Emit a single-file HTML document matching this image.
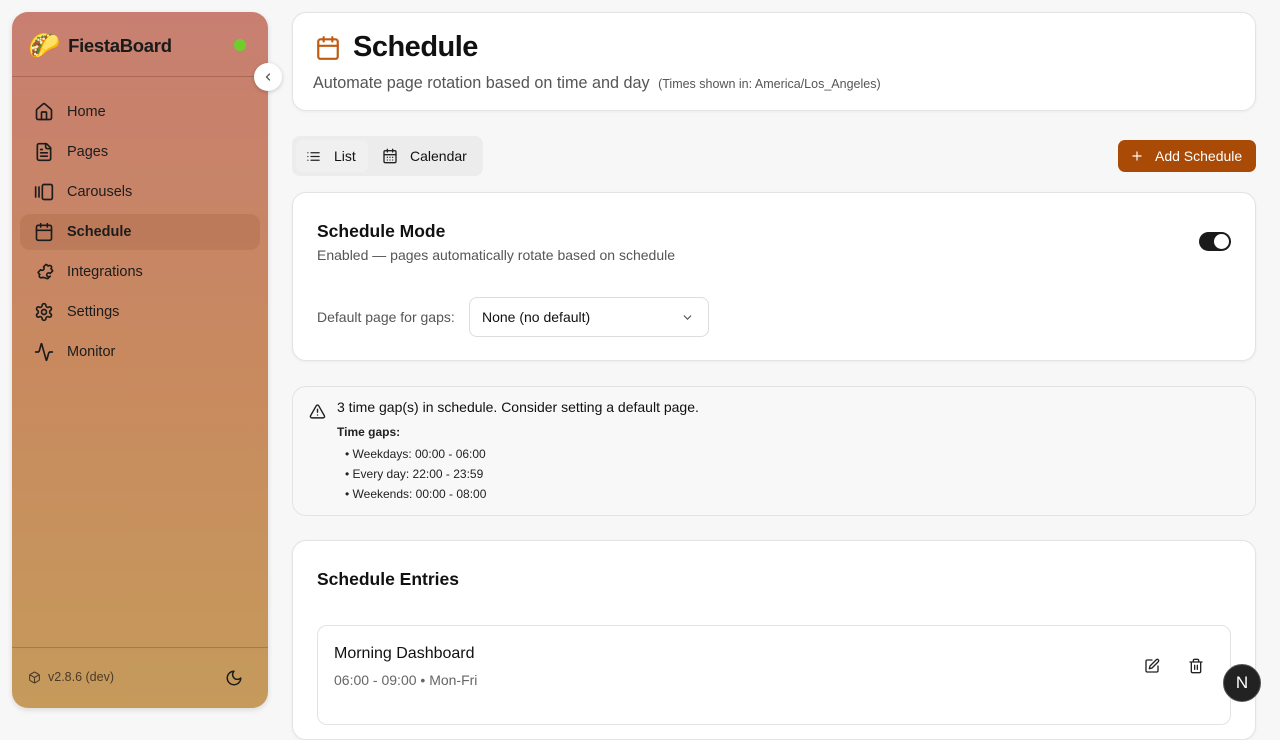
<!DOCTYPE html>
<html><head><meta charset="utf-8"><style>
*{box-sizing:border-box;margin:0;padding:0}
body{width:1280px;height:720px;overflow:hidden;background:#f7f7f7;font-family:"Liberation Sans",sans-serif;color:#111;position:relative}
.sb{position:absolute;left:12px;top:12px;width:256px;height:696px;border-radius:16px;background:linear-gradient(180deg,#c87f71 0%,#c8895f 50%,#c59a5b 100%);box-shadow:0 2px 6px rgba(0,0,0,.12)}
.logo{position:absolute;left:16px;top:18px;display:flex;align-items:center;font-size:18.5px;font-weight:bold;color:#1a1a1a;letter-spacing:-.3px}
.dot{position:absolute;left:222px;top:27px;width:12px;height:12px;border-radius:50%;background:#6fcf2a}
.div1{position:absolute;left:0;right:0;top:64px;border-top:1px solid rgba(120,60,40,.35)}
.col{position:absolute;left:254px;top:63px;width:28px;height:28px;border-radius:50%;background:#fff;box-shadow:0 1px 4px rgba(0,0,0,.2);display:flex;align-items:center;justify-content:center}
.nav{position:absolute;left:8px;top:82px;width:240px}
.it{height:36px;margin-bottom:4px;display:flex;align-items:center;padding-left:14px;font-size:14.5px;color:#1c1c1c;border-radius:10px}
.it svg{margin-right:13px}
.it.a{background:rgba(120,60,30,.15);font-weight:bold}
.div2{position:absolute;left:0;right:0;top:635px;border-top:1px solid rgba(120,70,30,.35)}
.ver{position:absolute;left:16px;top:658px;font-size:12.5px;color:#4a3a2a;display:flex;align-items:center}
.card{position:absolute;left:292px;width:964px;background:#fff;border:1px solid #e3e3e3;border-radius:14px;box-shadow:0 1px 3px rgba(0,0,0,.05)}
</style></head><body>
<div class="sb">
 <div class="logo"><span style="font-size:26px;margin-right:8px">🌮</span>FiestaBoard</div>
 <div class="dot"></div>
 <div class="div1"></div>
 <div class="nav">
  <div class="it"><svg width="20" height="20" viewBox="0 0 24 24" fill="none" stroke="#1c1c1c" stroke-width="2" stroke-linecap="round" stroke-linejoin="round"><path d="M15 21v-8a1 1 0 0 0-1-1h-4a1 1 0 0 0-1 1v8"/><path d="M3 10a2 2 0 0 1 .7-1.5l7-6a2 2 0 0 1 2.6 0l7 6A2 2 0 0 1 21 10v9a2 2 0 0 1-2 2H5a2 2 0 0 1-2-2z"/></svg>Home</div>
  <div class="it"><svg width="20" height="20" viewBox="0 0 24 24" fill="none" stroke="#1c1c1c" stroke-width="2" stroke-linecap="round" stroke-linejoin="round"><path d="M15 2H6a2 2 0 0 0-2 2v16a2 2 0 0 0 2 2h12a2 2 0 0 0 2-2V7z"/><path d="M14 2v4a2 2 0 0 0 2 2h4M16 13H8M16 17H8M10 9H8"/></svg>Pages</div>
  <div class="it"><svg width="20" height="20" viewBox="0 0 24 24" fill="none" stroke="#1c1c1c" stroke-width="2" stroke-linecap="round" stroke-linejoin="round"><path d="M2 6v12M6 6v12"/><rect x="10" y="3" width="12" height="18" rx="2"/></svg>Carousels</div>
  <div class="it a"><svg width="20" height="20" viewBox="0 0 24 24" fill="none" stroke="#1c1c1c" stroke-width="2" stroke-linecap="round" stroke-linejoin="round"><path d="M8 2v4M16 2v4"/><rect x="3" y="4" width="18" height="18" rx="2"/><path d="M3 10h18"/></svg>Schedule</div>
  <div class="it"><svg width="20" height="20" viewBox="0 0 24 24" fill="none" stroke="#1c1c1c" stroke-width="2" stroke-linecap="round" stroke-linejoin="round"><path d="M15.4 19.7a1 1 0 0 0 .7.3 1 1 0 0 0 .7-.3l2.6-2.6a2.4 2.4 0 1 1 0-3.4L22 11.2a1 1 0 0 0 0-1.4l-1.6-1.6a2.4 2.4 0 1 0-3.4-3.4L15.4 3.3a1 1 0 0 0-1.4 0l-2.6 2.6a2.4 2.4 0 1 1-3.4 3.4L5.4 11.9a1 1 0 0 0 0 1.4l1.600 1.6a2.4 2.4 0 1 0 3.4 3.4z"/></svg>Integrations</div>
  <div class="it"><svg width="20" height="20" viewBox="0 0 24 24" fill="none" stroke="#1c1c1c" stroke-width="2" stroke-linecap="round" stroke-linejoin="round"><path d="M12.2 2h-.4a2 2 0 0 0-2 2v.2a2 2 0 0 1-1 1.7l-.4.3a2 2 0 0 1-2 0l-.2-.1a2 2 0 0 0-2.7.7l-.2.4a2 2 0 0 0 .7 2.7l.2.1a2 2 0 0 1 1 1.7v.5a2 2 0 0 1-1 1.8l-.2.1a2 2 0 0 0-.7 2.7l.2.4a2 2 0 0 0 2.7.7l.2-.1a2 2 0 0 1 2 0l.4.3a2 2 0 0 1 1 1.7v.2a2 2 0 0 0 2 2h.4a2 2 0 0 0 2-2v-.2a2 2 0 0 1 1-1.7l.4-.3a2 2 0 0 1 2 0l.2.1a2 2 0 0 0 2.7-.7l.2-.4a2 2 0 0 0-.7-2.7l-.2-.1a2 2 0 0 1-1-1.8v-.5a2 2 0 0 1 1-1.7l.2-.1a2 2 0 0 0 .7-2.7l-.2-.4a2 2 0 0 0-2.7-.7l-.2.1a2 2 0 0 1-2 0l-.4-.3a2 2 0 0 1-1-1.7V4a2 2 0 0 0-2-2z"/><circle cx="12" cy="12" r="3"/></svg>Settings</div>
  <div class="it"><svg width="20" height="20" viewBox="0 0 24 24" fill="none" stroke="#1c1c1c" stroke-width="2" stroke-linecap="round" stroke-linejoin="round"><path d="M22 12h-2.5a2 2 0 0 0-1.9 1.5l-2.4 8.3a.3.3 0 0 1-.5 0L9.2 2.2a.3.3 0 0 0-.5 0L6.4 10.5A2 2 0 0 1 4.5 12H2"/></svg>Monitor</div>
 </div>
 <div class="div2"></div>
 <div class="ver"><svg width="13" height="13" viewBox="0 0 24 24" fill="none" stroke="#4a3a2a" stroke-width="2"><path d="M21 8a2 2 0 0 0-1-1.7l-7-4a2 2 0 0 0-2 0l-7 4A2 2 0 0 0 3 8v8a2 2 0 0 0 1 1.7l7 4a2 2 0 0 0 2 0l7-4a2 2 0 0 0 1-1.7z"/><path d="M3.3 7 12 12l8.7-5M12 22V12"/></svg><span style="margin-left:7px">v2.8.6 (dev)</span></div>
 <svg style="position:absolute;left:213px;top:657px" width="18" height="18" viewBox="0 0 24 24" fill="none" stroke="#1c1c1c" stroke-width="2" stroke-linecap="round" stroke-linejoin="round"><path d="M12 3a6 6 0 0 0 9 9 9 9 0 1 1-9-9z"/></svg>
</div>
<div class="col"><svg width="12" height="12" viewBox="0 0 24 24" fill="none" stroke="#555" stroke-width="2.5" stroke-linecap="round"><path d="M15 18l-6-6 6-6"/></svg></div>

<div class="card" style="top:12px;height:99px">
 <svg style="position:absolute;left:22px;top:22px" width="26" height="26" viewBox="0 0 24 24" fill="none" stroke="#c05a10" stroke-width="2" stroke-linecap="round" stroke-linejoin="round"><path d="M8 2v4M16 2v4"/><rect x="3" y="4" width="18" height="18" rx="2"/><path d="M3 10h18"/></svg>
 <div style="position:absolute;left:60px;top:18px;font-size:29px;font-weight:bold;letter-spacing:-.5px">Schedule</div>
 <div style="position:absolute;left:20px;top:61px;font-size:16.2px;color:#555">Automate page rotation based on time and day <span style="font-size:12.5px;margin-left:4px">(Times shown in: America/Los_Angeles)</span></div>
</div>

<div style="position:absolute;left:292px;top:136px;width:191px;height:40px;background:#ececec;border-radius:8px;font-size:14px">
 <div style="position:absolute;left:4px;top:4px;width:72px;height:32px;background:#f0f0f0;border-radius:6px"></div>
 <svg style="position:absolute;left:14px;top:13px" width="15" height="15" viewBox="0 0 24 24" fill="none" stroke="#222" stroke-width="2" stroke-linecap="round"><path d="M3 6h.01M3 12h.01M3 18h.01M8 6h13M8 12h13M8 18h13"/></svg>
 <span style="position:absolute;left:42px;top:12px">List</span>
 <svg style="position:absolute;left:90px;top:12px" width="16" height="16" viewBox="0 0 24 24" fill="none" stroke="#222" stroke-width="2" stroke-linecap="round"><path d="M8 2v4M16 2v4"/><rect x="3" y="4" width="18" height="18" rx="2"/><path d="M3 10h18M8 14h.01M12 14h.01M16 14h.01M8 18h.01M12 18h.01M16 18h.01"/></svg>
 <span style="position:absolute;left:118px;top:12px">Calendar</span>
</div>
<div style="position:absolute;left:1118px;top:140px;width:138px;height:32px;background:#a94a06;border-radius:7px;color:#fff;font-size:14px;display:flex;align-items:center;padding-left:12px">
 <svg width="14" height="14" viewBox="0 0 24 24" fill="none" stroke="#fff" stroke-width="2" stroke-linecap="round"><path d="M5 12h14M12 5v14"/></svg><span style="margin-left:11px">Add Schedule</span></div>

<div class="card" style="top:192px;height:169px">
 <div style="position:absolute;left:24px;top:28px;font-size:17.5px;font-weight:600">Schedule Mode</div>
 <div style="position:absolute;left:24px;top:54px;font-size:14px;color:#555">Enabled — pages automatically rotate based on schedule</div>
 <div style="position:absolute;left:906px;top:39px;width:32px;height:19px;border-radius:10px;background:#1a1a1a"><div style="position:absolute;right:2px;top:2px;width:15px;height:15px;border-radius:50%;background:#fff"></div></div>
 <div style="position:absolute;left:24px;top:116px;font-size:14px;color:#555">Default page for gaps:</div>
 <div style="position:absolute;left:176px;top:104px;width:240px;height:40px;border:1px solid #ddd;border-radius:8px;font-size:14px;padding:11px 12px">None (no default)
  <svg style="position:absolute;right:14px;top:13px" width="13" height="13" viewBox="0 0 24 24" fill="none" stroke="#555" stroke-width="2.2" stroke-linecap="round"><path d="M6 9l6 6 6-6"/></svg></div>
</div>

<div class="card" style="top:386px;height:130px;background:#f8f8f8;box-shadow:none">
 <svg style="position:absolute;left:16px;top:16px" width="17" height="17" viewBox="0 0 24 24" fill="none" stroke="#222" stroke-width="2" stroke-linecap="round" stroke-linejoin="round"><path d="M21.7 18 13.7 4a2 2 0 0 0-3.5 0l-8 14a2 2 0 0 0 1.8 3h16a2 2 0 0 0 1.7-3M12 9v4M12 17h.01"/></svg>
 <div style="position:absolute;left:44px;top:12px;font-size:14px">3 time gap(s) in schedule. Consider setting a default page.</div>
 <div style="position:absolute;left:44px;top:38px;font-size:12px;font-weight:bold;color:#222">Time gaps:</div>
 <div style="position:absolute;left:52px;top:57px;font-size:12px;line-height:20px;color:#222">• Weekdays: 00:00 - 06:00<br>• Every day: 22:00 - 23:59<br>• Weekends: 00:00 - 08:00</div>
</div>

<div class="card" style="top:540px;height:200px">
 <div style="position:absolute;left:24px;top:28px;font-size:17.5px;font-weight:600">Schedule Entries</div>
 <div style="position:absolute;left:24px;top:84px;width:914px;height:100px;border:1px solid #e3e3e3;border-radius:10px">
  <div style="position:absolute;left:16px;top:19px;font-size:16px">Morning Dashboard</div>
  <div style="position:absolute;left:16px;top:46px;font-size:14px;color:#666">06:00 - 09:00 • Mon-Fri</div>
  <svg style="position:absolute;left:826px;top:32px" width="16" height="16" viewBox="0 0 24 24" fill="none" stroke="#222" stroke-width="2" stroke-linecap="round" stroke-linejoin="round"><path d="M12 3H5a2 2 0 0 0-2 2v14a2 2 0 0 0 2 2h14a2 2 0 0 0 2-2v-7"/><path d="M18.4 2.6a2.1 2.1 0 1 1 3 3L12 15l-4 1 1-4z"/></svg>
  <svg style="position:absolute;left:870px;top:32px" width="16" height="16" viewBox="0 0 24 24" fill="none" stroke="#222" stroke-width="2" stroke-linecap="round" stroke-linejoin="round"><path d="M3 6h18M19 6v14a2 2 0 0 1-2 2H7a2 2 0 0 1-2-2V6M8 6V4a2 2 0 0 1 2-2h4a2 2 0 0 1 2 2v2M10 11v6M14 11v6"/></svg>
 </div>
</div>
<div style="position:absolute;left:1223px;top:664px;width:38px;height:38px;border-radius:50%;background:#222;border:1px solid #555;color:#fff;font-size:17px;display:flex;align-items:center;justify-content:center">N</div>
</body></html>
